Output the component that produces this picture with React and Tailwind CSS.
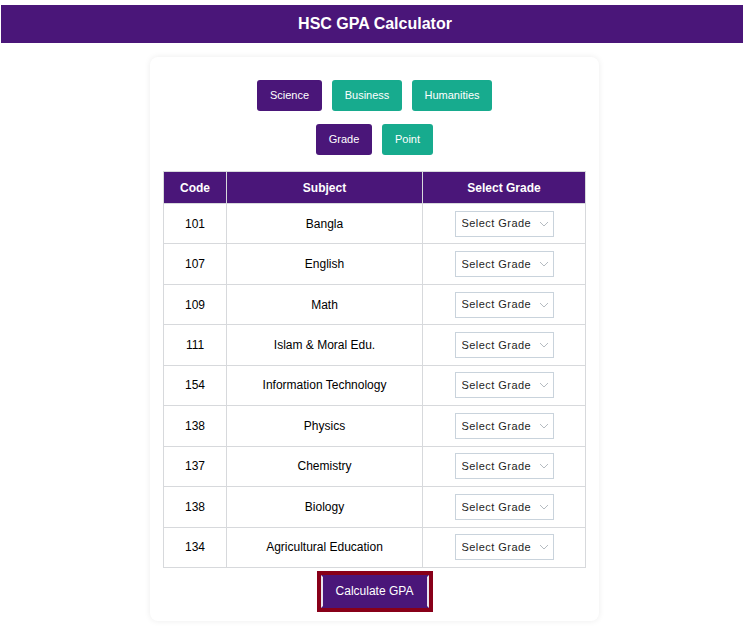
import { useState } from 'react';

const subjects = [
  { code: '101', name: 'Bangla' },
  { code: '107', name: 'English' },
  { code: '109', name: 'Math' },
  { code: '111', name: 'Islam & Moral Edu.' },
  { code: '154', name: 'Information Technology' },
  { code: '138', name: 'Physics' },
  { code: '137', name: 'Chemistry' },
  { code: '138', name: 'Biology' },
  { code: '134', name: 'Agricultural Education' },
];

const grades = ['A+', 'A', 'A-', 'B', 'C', 'D', 'F'];

function GradeSelect() {
  return (
    <div className="relative w-[99px] h-[26px] mx-auto">
      <select
        defaultValue=""
        className="appearance-none w-full h-full border border-[#c9d3dc] bg-white pl-[6px] pr-5 text-[11px] text-[#1e1e1e] tracking-[0.45px] outline-none"
      >
        <option value="" disabled>Select Grade</option>
        {grades.map((g) => (
          <option key={g} value={g}>{g}</option>
        ))}
      </select>
      <svg className="absolute right-[5px] top-[10px] pointer-events-none" width="10" height="6" viewBox="0 0 10 6" fill="none">
        <path d="M1 1l4 4 4-4" stroke="#b5bbc1" strokeWidth="1" />
      </svg>
    </div>
  );
}

export default function App() {
  const [group, setGroup] = useState('Science');
  const [mode, setMode] = useState('Grade');

  const btn = (active) =>
    `h-[31px] rounded-[3px] text-white text-[11px] font-normal ${active ? 'bg-[#4a1679]' : 'bg-[#17ab8e]'}`;

  return (
    <div className="min-h-[627px] bg-white font-['Liberation_Sans',Arial,sans-serif] pt-[5px]">
      {/* top bar */}
      <div className="mx-[1px] h-[38px] bg-[#4a1679] flex items-center justify-center pl-[6px]">
        <h1 className="text-white text-[16px] font-bold">HSC GPA Calculator</h1>
      </div>

      <div className="pl-[5px]">
        <div className="w-[449px] mx-auto mt-[14px] bg-white rounded-[8px] shadow-[0_0_6px_rgba(0,0,0,0.08)] px-[13px] pt-[23px] pb-[9px]">
          <div className="flex justify-center gap-[10px]">
            {['Science', 'Business', 'Humanities'].map((g) => (
              <button
                key={g}
                onClick={() => setGroup(g)}
                className={`${btn(group === g)} ${g === 'Science' ? 'w-[65px]' : g === 'Business' ? 'w-[70px]' : 'w-[80px]'}`}
              >
                {g}
              </button>
            ))}
          </div>
          <div className="flex justify-center gap-[10px] mt-[13px]">
            {['Grade', 'Point'].map((m) => (
              <button
                key={m}
                onClick={() => setMode(m)}
                className={`${btn(mode === m)} ${m === 'Grade' ? 'w-[56px]' : 'w-[51px]'}`}
              >
                {m}
              </button>
            ))}
          </div>

          <table className="w-[423px] mt-[16px] border-collapse text-[12px] text-black">
            <thead>
              <tr className="bg-[#4a1679] text-white h-[32px]">
                <th className="w-[63px] border border-[#d7d9dc] text-[12px] font-bold">Code</th>
                <th className="w-[196px] border border-[#d7d9dc] text-[12px] font-bold">Subject</th>
                <th className="border border-[#d7d9dc] text-[12px] font-bold">Select Grade</th>
              </tr>
            </thead>
            <tbody>
              {subjects.map((s, i) => (
                <tr key={i} className="h-[40.45px]">
                  <td className="border border-[#d7d9dc] text-center">{s.code}</td>
                  <td className="border border-[#d7d9dc] text-center">{s.name}</td>
                  <td className="border border-[#d7d9dc] text-center">
                    <GradeSelect />
                  </td>
                </tr>
              ))}
            </tbody>
          </table>

          <div className="flex justify-center mt-[3px]">
            <div className="bg-[#880019] p-[4px]">
              <button className="w-[108px] h-[33px] bg-[#4a1679] border-2 border-y-[#4a1679] border-x-[#e8e4ee] text-white text-[12px]">
                Calculate GPA
              </button>
            </div>
          </div>
        </div>
      </div>
    </div>
  );
}
